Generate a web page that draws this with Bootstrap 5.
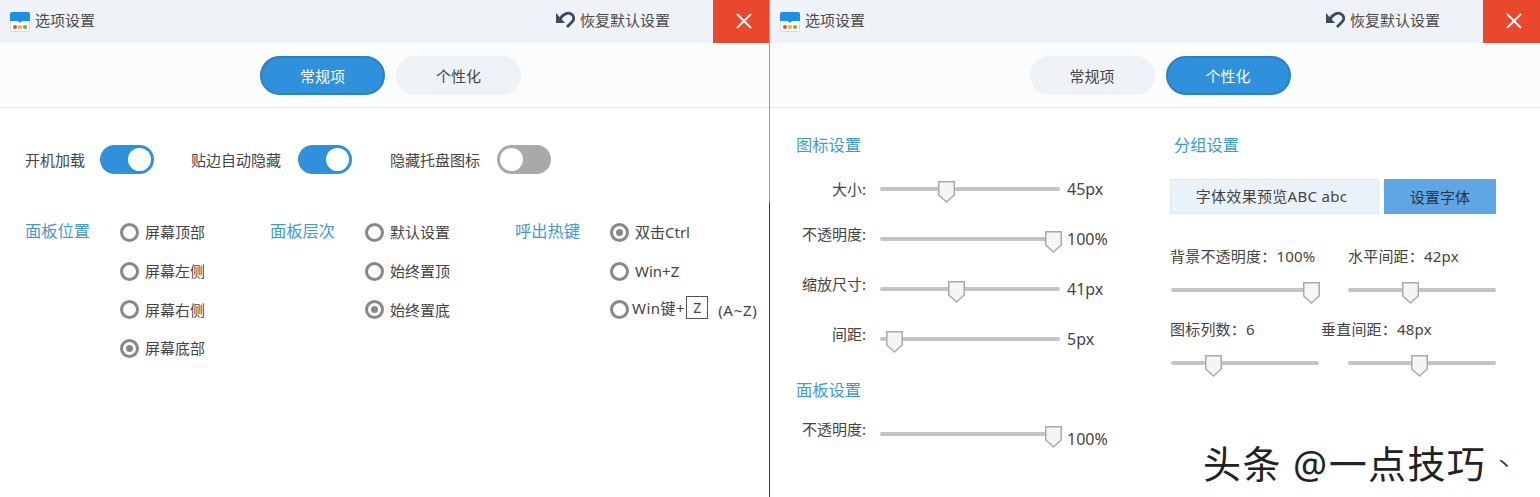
<!DOCTYPE html>
<html lang="zh-CN">
<head>
<meta charset="utf-8">
<title>选项设置</title>
<link href="https://cdn.jsdelivr.net/npm/bootstrap@5.3.0/dist/css/bootstrap.min.css" rel="stylesheet">
<style>
html,body{height:497px;overflow:hidden}
body{font-family:"Noto Sans","Noto Sans CJK SC",sans-serif;font-size:15px;line-height:22px;color:#444;background:#fff;position:relative}
.win{height:497px;flex:none}
.win-a{width:769px}
.win-b{width:770px}
.split{width:1px;flex:none;background:linear-gradient(#9b99ab 0,#9b99ab 200px,#3a3a3a 205px,#3a3a3a 100%)}
.tbar{height:43px;background:#eff3f8;padding-left:10px}
.tbar-title{margin-left:5px;margin-bottom:4px;color:#4a4a4a}
.restore{margin-right:43px;margin-bottom:4px;color:#4a4a4a}
.restore svg{margin-right:5px}
.closex{width:56px;height:43px;background:#e9482d;padding:0 0 2px 5px}
.win-b .closex{width:57px}
.tabband{height:65px;background:#fbfcfc;border-bottom:1px solid #e9e9e9;padding:13px 0 0 12px;gap:11px}
.win-b .tabband{padding-left:10px}
.tabpill{width:125px;height:39px;padding:0;font-size:15px;line-height:22px;background:#eef1f5;color:#444;border:0}
.tabpill.on{background:#2f90dc;color:#fff;border:2px solid #2b81c3}
.pane-a{padding:37px 0 0 25px}
.tog{width:54px;height:29px;background:#2f90dc;padding:3px}
.tog i{width:23px;height:23px;background:#fff;display:block}
.tog.off{background:#a9a9a9}
.tgl-1{margin-left:15px;margin-right:37px}
.tgl-2{margin-left:17px;margin-right:38px}
.tgl-3{margin-left:17px}
.optgroups{margin-top:39px}
.optgroup{width:245px}
.opt-head{width:95px;color:#3d9ad9;font-size:16.3px;height:39px;line-height:36px}
.opt-row{height:38.7px}
.radio-dot{width:19px;height:19px;border:3px solid #888;background:#fff;margin:0 6px 0 0;flex:none;padding:3px}
.radio-dot.sel::before{content:"";display:block;width:7px;height:7px;background:#888;border-radius:50%}
.radio-tight{margin-right:3px}
.hot-raised{margin-bottom:4px;letter-spacing:.5px}
.hot-range{letter-spacing:.7px}
.keybox{width:22px;height:23px;border:1px solid #555;margin:0 10px 0 1px;font-size:14px;line-height:21px;letter-spacing:0}
.pane-b{padding:26px 0 0 26px}
.col-l{width:374px}
.sec{color:#3d9ad9;font-size:16.3px;height:22px}
.sl-row{height:50px}
.sl-row .s-lab{width:70px;margin-right:14px;text-align:right;margin-top:-10px;white-space:nowrap}
.sl-row .s-val{margin-left:7px;font-size:16px}
.sl-row.lvl .s-lab{margin-top:0}
.sl-last .s-val{margin-top:10px}
.rail{height:4px;background:#c4c4c4;border-radius:2px;position:relative}
.rail-w{width:180px}
.rail-n{width:148px}
.thumb{position:absolute;top:-6px;width:17px;height:22px;display:block}
.sec-2{margin-top:15px}
.sl-first{margin-top:8px}
.sl-last{margin-top:8px}
.col-r .sec{padding-left:4px}
.prev-row{margin-top:23px}
.preview{width:209px;height:35px;background:#eaf2f9;border:1px solid #dfe8f0;color:#444;line-height:32px;letter-spacing:.3px;padding-right:6px}
.fontbtn{width:112px;height:35px;background:#5fa7e4;color:#333;border:0;border-radius:0;padding:2px 0 0;font-size:15px;margin-left:5px}
.lab-1{margin-top:31px;letter-spacing:.2px}
.lab-row span:first-child{width:178px}
.lab-row-2 span:first-child{width:151px}
.rail-row{height:18px;padding-top:7px;margin-top:14px;margin-left:1px}
.rail-row .rail + .rail{margin-left:29px}
.lab-2{margin-top:19px;letter-spacing:.2px}
.wm{position:absolute;left:1203px;top:439px;font-size:38px;line-height:48px;color:#222;letter-spacing:1.4px;white-space:nowrap;font-weight:400}
.speck{position:absolute;left:1495px;top:453px;font-size:18px;line-height:22px;color:#222}
</style>
</head>
<body>
<div class="d-flex">
  <section class="win win-a">
    <div class="tbar d-flex align-items-center">
      <svg width="20" height="20" viewBox="0 0 20 20"><rect x=".5" y=".5" width="19" height="19" rx="2" fill="#fff" stroke="#d8d8d8"/><path d="M2 0H18a2 2 0 0 1 2 2V9H12L10 11 8 9H0V2a2 2 0 0 1 2-2Z" fill="#1c8fe9"/><circle cx="5" cy="15" r="2" fill="#e8483a"/><circle cx="10" cy="15" r="2" fill="#f3b51f"/><circle cx="15" cy="15" r="2" fill="#6cb33f"/></svg>
      <span class="tbar-title">选项设置</span>
      <span class="restore ms-auto d-flex align-items-center"><svg width="20" height="18" viewBox="0 0 20 18"><path d="M5 8C8 3 13 1 16 3C20 5 19 9 17 11L12 16" fill="none" stroke="#3b4a5c" stroke-width="2.800"/><path d="M1 2V12H10Z" fill="#3b4a5c"/></svg>恢复默认设置</span>
      <span class="closex d-flex align-items-center justify-content-center"><svg width="16" height="16" viewBox="0 0 16 16"><path d="M1 1L15 15M15 1L1 15" stroke="#fff" stroke-width="1.800"/></svg></span>
    </div>
    <div class="tabband d-flex justify-content-center">
      <button class="btn tabpill on rounded-pill">常规项</button>
      <button class="btn tabpill rounded-pill">个性化</button>
    </div>
    <div class="pane-a">
      <div class="d-flex align-items-center">
        <span>开机加载</span><span class="tog tgl-1 rounded-pill d-flex justify-content-end"><i class="rounded-circle"></i></span>
        <span>贴边自动隐藏</span><span class="tog tgl-2 rounded-pill d-flex justify-content-end"><i class="rounded-circle"></i></span>
        <span>隐藏托盘图标</span><span class="tog off tgl-3 rounded-pill d-flex"><i class="rounded-circle"></i></span>
      </div>
      <div class="optgroups d-flex">
        <div class="optgroup d-flex">
          <div class="opt-head">面板位置</div>
          <div>
            <div class="opt-row d-flex align-items-center"><span class="radio-dot rounded-circle"></span>屏幕顶部</div>
            <div class="opt-row d-flex align-items-center"><span class="radio-dot rounded-circle"></span>屏幕左侧</div>
            <div class="opt-row d-flex align-items-center"><span class="radio-dot rounded-circle"></span>屏幕右侧</div>
            <div class="opt-row d-flex align-items-center"><span class="radio-dot sel rounded-circle"></span>屏幕底部</div>
          </div>
        </div>
        <div class="optgroup d-flex">
          <div class="opt-head">面板层次</div>
          <div>
            <div class="opt-row d-flex align-items-center"><span class="radio-dot rounded-circle"></span>默认设置</div>
            <div class="opt-row d-flex align-items-center"><span class="radio-dot rounded-circle"></span>始终置顶</div>
            <div class="opt-row d-flex align-items-center"><span class="radio-dot sel rounded-circle"></span>始终置底</div>
          </div>
        </div>
        <div class="optgroup d-flex">
          <div class="opt-head">呼出热键</div>
          <div class="text-nowrap">
            <div class="opt-row d-flex align-items-center"><span class="radio-dot sel rounded-circle"></span>双击Ctrl</div>
            <div class="opt-row d-flex align-items-center"><span class="radio-dot rounded-circle"></span>Win+Z</div>
            <div class="opt-row d-flex align-items-center"><span class="radio-dot radio-tight rounded-circle"></span><span class="hot-raised d-flex align-items-center">Win键+<span class="keybox text-center">Z</span></span><span class="hot-range">(A~Z)</span></div>
          </div>
        </div>
      </div>
    </div>
  </section>
  <div class="split"></div>
  <section class="win win-b">
    <div class="tbar d-flex align-items-center">
      <svg width="20" height="20" viewBox="0 0 20 20"><rect x=".5" y=".5" width="19" height="19" rx="2" fill="#fff" stroke="#d8d8d8"/><path d="M2 0H18a2 2 0 0 1 2 2V9H12L10 11 8 9H0V2a2 2 0 0 1 2-2Z" fill="#1c8fe9"/><circle cx="5" cy="15" r="2" fill="#e8483a"/><circle cx="10" cy="15" r="2" fill="#f3b51f"/><circle cx="15" cy="15" r="2" fill="#6cb33f"/></svg>
      <span class="tbar-title">选项设置</span>
      <span class="restore ms-auto d-flex align-items-center"><svg width="20" height="18" viewBox="0 0 20 18"><path d="M5 8C8 3 13 1 16 3C20 5 19 9 17 11L12 16" fill="none" stroke="#3b4a5c" stroke-width="2.800"/><path d="M1 2V12H10Z" fill="#3b4a5c"/></svg>恢复默认设置</span>
      <span class="closex d-flex align-items-center justify-content-center"><svg width="16" height="16" viewBox="0 0 16 16"><path d="M1 1L15 15M15 1L1 15" stroke="#fff" stroke-width="1.800"/></svg></span>
    </div>
    <div class="tabband d-flex justify-content-center">
      <button class="btn tabpill rounded-pill">常规项</button>
      <button class="btn tabpill on rounded-pill">个性化</button>
    </div>
    <div class="pane-b d-flex">
      <div class="col-l">
        <div class="sec">图标设置</div>
        <div class="sl-first">
          <div class="sl-row lvl d-flex align-items-center"><span class="s-lab">大小:</span><div class="rail rail-w"><svg class="thumb" style="left:58px" viewBox="0 0 17 22"><path d="M.75.75H16.250V14L8.500 21 .75 14Z" fill="#f5f5f5" stroke="#aaa" stroke-width="1.500"/></svg></div><span class="s-val">45px</span></div>
          <div class="sl-row d-flex align-items-center"><span class="s-lab">不透明度:</span><div class="rail rail-w"><svg class="thumb" style="left:165px" viewBox="0 0 17 22"><path d="M.75.75H16.250V14L8.500 21 .75 14Z" fill="#f5f5f5" stroke="#aaa" stroke-width="1.500"/></svg></div><span class="s-val">100%</span></div>
          <div class="sl-row d-flex align-items-center"><span class="s-lab">缩放尺寸:</span><div class="rail rail-w"><svg class="thumb" style="left:68px" viewBox="0 0 17 22"><path d="M.75.75H16.250V14L8.500 21 .75 14Z" fill="#f5f5f5" stroke="#aaa" stroke-width="1.500"/></svg></div><span class="s-val">41px</span></div>
          <div class="sl-row d-flex align-items-center"><span class="s-lab">间距:</span><div class="rail rail-w"><svg class="thumb" style="left:6px" viewBox="0 0 17 22"><path d="M.75.75H16.250V14L8.500 21 .75 14Z" fill="#f5f5f5" stroke="#aaa" stroke-width="1.500"/></svg></div><span class="s-val">5px</span></div>
        </div>
        <div class="sec sec-2">面板设置</div>
        <div class="sl-last sl-row d-flex align-items-center"><span class="s-lab">不透明度:</span><div class="rail rail-w"><svg class="thumb" style="left:165px" viewBox="0 0 17 22"><path d="M.75.75H16.250V14L8.500 21 .75 14Z" fill="#f5f5f5" stroke="#aaa" stroke-width="1.500"/></svg></div><span class="s-val">100%</span></div>
      </div>
      <div class="col-r">
        <div class="sec">分组设置</div>
        <div class="d-flex prev-row text-center">
          <div class="preview">字体效果预览ABC abc</div>
          <button class="btn fontbtn">设置字体</button>
        </div>
        <div class="d-flex lab-1 lab-row"><span>背景不透明度：100%</span><span>水平间距：42px</span></div>
        <div class="d-flex rail-row"><div class="rail rail-n"><svg class="thumb" style="left:132px" viewBox="0 0 17 22"><path d="M.75.75H16.250V14L8.500 21 .75 14Z" fill="#f5f5f5" stroke="#aaa" stroke-width="1.500"/></svg></div><div class="rail rail-n"><svg class="thumb" style="left:54px" viewBox="0 0 17 22"><path d="M.75.75H16.250V14L8.500 21 .75 14Z" fill="#f5f5f5" stroke="#aaa" stroke-width="1.500"/></svg></div></div>
        <div class="d-flex lab-2 lab-row-2"><span>图标列数：6</span><span>垂直间距：48px</span></div>
        <div class="d-flex rail-row"><div class="rail rail-n"><svg class="thumb" style="left:34px" viewBox="0 0 17 22"><path d="M.75.75H16.250V14L8.500 21 .75 14Z" fill="#f5f5f5" stroke="#aaa" stroke-width="1.500"/></svg></div><div class="rail rail-n"><svg class="thumb" style="left:63px" viewBox="0 0 17 22"><path d="M.75.75H16.250V14L8.500 21 .75 14Z" fill="#f5f5f5" stroke="#aaa" stroke-width="1.500"/></svg></div></div>
      </div>
    </div>
  </section>
</div>
<div class="wm">头条 @一点技巧</div>
<div class="speck">丶</div>
</body>
</html>
